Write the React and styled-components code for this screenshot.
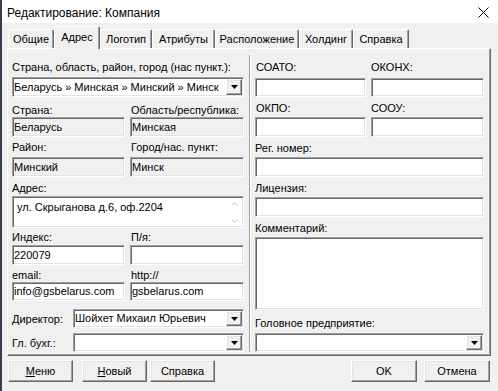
import React from 'react';
import styled, { createGlobalStyle } from 'styled-components';

const GlobalStyle = createGlobalStyle`
  html, body {
    margin: 0;
    padding: 0;
    background: #f0f0f0;
  }
  body {
    font-family: "Liberation Sans", Arial, sans-serif;
    font-size: 11px;
    color: #000;
  }
`;

const Window = styled.div`
  width: 498px;
  height: 391px;
  box-sizing: border-box;
  border-left: 2px solid #3a3b4c;
  background: #f0f0f0;
  overflow: hidden;
`;

const TitleBar = styled.div`
  height: 23px;
  background: #ffffff;
  display: flex;
  align-items: center;
  justify-content: space-between;
  padding: 2px 9px 0 5px;
  box-sizing: border-box;
`;

const Title = styled.div`
  font-size: 12px;
  color: #000;
`;

const TabStrip = styled.div`
  height: 25px;
  display: flex;
  align-items: flex-end;
  padding-left: 6px;
`;

const Tab = styled.div`
  position: relative;
  z-index: ${p => (p.$active ? 2 : 0)};
  width: ${p => p.$w}px;
  height: ${p => (p.$active ? 23 : 19)}px;
  margin-bottom: ${p => (p.$active ? -1 : 0)}px;
  box-sizing: border-box;
  border: 1px solid;
  border-bottom: none;
  border-color: #ffffff #696969 transparent #ffffff;
  box-shadow: inset -1px 0 0 #a0a0a0;
  border-radius: 2px 2px 0 0;
  background: #f0f0f0;
  font-size: 11px;
  line-height: ${p => (p.$active ? 20 : 18)}px;
  text-align: center;
  white-space: nowrap;
`;

const Panel = styled.div`
  position: relative;
  z-index: 1;
  margin-left: 5px;
  width: 484px;
  height: 308px;
  box-sizing: border-box;
  border-top: 1px solid #ffffff;
  border-left: 1px solid #ffffff;
  border-right: 1px solid #696969;
  border-bottom: 1px solid #696969;
  box-shadow: inset -1px -1px 0 #a0a0a0;
  display: flex;
  padding: 12px 6px 3px 4px;
`;

const Column = styled.div`
  width: ${p => p.$w}px;
  display: flex;
  flex-direction: column;
`;

const Divider = styled.div`
  width: 2px;
  margin: -6px 4px 0 5px;
  border-left: 1px solid #a0a0a0;
  border-right: 1px solid #ffffff;
  box-sizing: border-box;
`;

const Pair = styled.div`
  display: grid;
  grid-template-columns: ${p => p.$cols};
  column-gap: 5px;
  margin-top: ${p => p.$mt || 0}px;
`;

const Label = styled.div`
  height: 13px;
  line-height: 13px;
  font-size: 11px;
  white-space: nowrap;
  margin-top: ${p => p.$mt || 0}px;
  padding-left: ${p => p.$pl || 0}px;
`;

const Field = styled.div`
  height: ${p => p.$h || 20}px;
  margin-top: ${p => p.$mt || 0}px;
  box-sizing: border-box;
  border: 1px solid;
  border-color: #a0a0a0 #ffffff #ffffff #a0a0a0;
  box-shadow: inset 1px 1px 0 #696969, inset -1px -1px 0 #e3e3e3;
  background: ${p => (p.$readOnly ? '#f0f0f0' : '#ffffff')};
  padding-left: 1px;
  font-size: 11px;
  line-height: ${p => (p.$h || 20) - 2}px;
  white-space: nowrap;
  overflow: hidden;
`;

const Memo = styled(Field)`
  display: flex;
  line-height: 18px;
  padding: 1px 1px 1px 4px;
`;

const MemoText = styled.div`
  flex: 1;
`;

const ScrollCol = styled.div`
  width: 16px;
  display: flex;
  flex-direction: column;
  align-items: center;
  justify-content: space-between;
  padding: 4px 0 3px;
`;

const Combo = styled(Field)`
  display: flex;
  align-items: stretch;
  padding: 1px;
  flex: ${p => (p.$grow ? 1 : 'none')};
`;

const ComboText = styled.div`
  flex: 1;
  line-height: ${p => p.$lh}px;
  overflow: hidden;
`;

const DropBtn = styled.div`
  width: 16px;
  box-sizing: border-box;
  border: 1px solid;
  border-color: #ffffff #696969 #696969 #ffffff;
  box-shadow: inset -1px -1px 0 #a0a0a0, inset 1px 1px 0 #e3e3e3;
  background: #f0f0f0;
  display: flex;
  align-items: center;
  justify-content: center;
`;

const InlineRow = styled.div`
  display: flex;
  align-items: center;
  margin-top: ${p => p.$mt || 0}px;
`;

const InlineLabel = styled.div`
  width: 61px;
  font-size: 11px;
  white-space: nowrap;
`;

const ButtonRow = styled.div`
  display: flex;
  justify-content: space-between;
  margin-top: 4px;
  padding: 0 8px 0 6px;
`;

const ButtonGroup = styled.div`
  display: flex;
`;

const Button = styled.div`
  width: ${p => p.$w || 65}px;
  height: 22px;
  margin-left: ${p => p.$ml || 0}px;
  box-sizing: border-box;
  border: 1px solid;
  border-color: #ffffff #696969 #696969 #ffffff;
  box-shadow: inset -1px -1px 0 #a0a0a0, inset 1px 1px 0 #e3e3e3;
  background: #f0f0f0;
  font-size: 11px;
  line-height: 20px;
  text-align: center;
  & u {
    text-decoration: underline;
  }
`;

const Arrow = () => (
  <svg width="7" height="4" viewBox="0 0 7 4">
    <polygon points="0,0 7,0 3.5,4" fill="#000" />
  </svg>
);

const Chevron = ({ up }) => (
  <svg width="7" height="4" viewBox="0 0 7 4">
    <polyline
      points={up ? '0.5,3.5 3.5,0.5 6.5,3.5' : '0.5,0.5 3.5,3.5 6.5,0.5'}
      fill="none"
      stroke="#c4c4c4"
      strokeWidth="1"
    />
  </svg>
);

const CloseIcon = () => (
  <svg width="11" height="11" viewBox="0 0 11 11">
    <path d="M0.5 0.5 L10.5 10.5 M10.5 0.5 L0.5 10.5" stroke="#000" strokeWidth="1" />
  </svg>
);

const ComboBox = ({ h, mt, grow, children }) => (
  <Combo $h={h} $mt={mt} $grow={grow}>
    <ComboText $lh={h - 4}>{children}</ComboText>
    <DropBtn>
      <Arrow />
    </DropBtn>
  </Combo>
);

const tabs = [
  { name: 'Общие', w: 46 },
  { name: 'Адрес', w: 46, active: true },
  { name: 'Логотип', w: 52 },
  { name: 'Атрибуты', w: 63 },
  { name: 'Расположение', w: 84 },
  { name: 'Холдинг', w: 54 },
  { name: 'Справка', w: 56 },
];

const App = () => (
  <>
    <GlobalStyle />
    <Window>
      <TitleBar>
        <Title>Редактирование: Компания</Title>
        <CloseIcon />
      </TitleBar>
      <TabStrip>
        {tabs.map(t => (
          <Tab key={t.name} $w={t.w} $active={t.active}>{t.name}</Tab>
        ))}
      </TabStrip>
      <Panel>
        <Column $w={232}>
          <Label>Страна, область, район, город (нас пункт.):</Label>
          <ComboBox h={20} mt={3}>Беларусь » Минская » Минский » Минск</ComboBox>
          <Pair $cols="113px 114px" $mt={7}>
            <Label>Страна:</Label>
            <Label $pl={1}>Область/республика:</Label>
            <Field $readOnly>Беларусь</Field>
            <Field $readOnly>Минская</Field>
          </Pair>
          <Pair $cols="113px 114px" $mt={4}>
            <Label>Район:</Label>
            <Label $pl={1}>Город/нас. пункт:</Label>
            <Field $readOnly $mt={3}>Минский</Field>
            <Field $readOnly $mt={3}>Минск</Field>
          </Pair>
          <Label $mt={5}>Адрес:</Label>
          <Memo $h={32} $mt={1}>
            <MemoText>ул. Скрыганова д.6, оф.2204</MemoText>
            <ScrollCol>
              <Chevron up />
              <Chevron />
            </ScrollCol>
          </Memo>
          <Pair $cols="113px 114px" $mt={3}>
            <Label>Индекс:</Label>
            <Label $pl={1}>П/я:</Label>
            <Field $mt={1}>220079</Field>
            <Field $mt={1} />
          </Pair>
          <Pair $cols="113px 114px" $mt={4}>
            <Label>email:</Label>
            <Label $pl={1}>http://</Label>
            <Field $h={19}>info@gsbelarus.com</Field>
            <Field $h={19}>gsbelarus.com</Field>
          </Pair>
          <InlineRow $mt={8}>
            <InlineLabel>Директор:</InlineLabel>
            <ComboBox h={19} grow>Шойхет Михаил Юрьевич</ComboBox>
          </InlineRow>
          <InlineRow $mt={5}>
            <InlineLabel>Гл. бухг.:</InlineLabel>
            <ComboBox h={19} grow />
          </InlineRow>
        </Column>
        <Divider />
        <Column $w={229}>
          <Pair $cols="111px 113px">
            <Label $pl={1}>СОАТО:</Label>
            <Label>ОКОНХ:</Label>
            <Field $h={19} $mt={4} />
            <Field $h={19} $mt={4} />
          </Pair>
          <Pair $cols="111px 113px" $mt={5}>
            <Label $pl={1}>ОКПО:</Label>
            <Label>СООУ:</Label>
            <Field $mt={2} />
            <Field $mt={2} />
          </Pair>
          <Label $mt={5}>Рег. номер:</Label>
          <Field $mt={2} />
          <Label $mt={5}>Лицензия:</Label>
          <Field $mt={2} />
          <Label $mt={5}>Комментарий:</Label>
          <Field $h={73} $mt={2} />
          <Label $mt={7}>Головное предприятие:</Label>
          <ComboBox h={19} mt={3} />
        </Column>
      </Panel>
      <ButtonRow>
        <ButtonGroup>
          <Button><u>М</u>еню</Button>
          <Button $ml={9}><u>Н</u>овый</Button>
          <Button $ml={3}>Справка</Button>
        </ButtonGroup>
        <ButtonGroup>
          <Button $w={66}>OK</Button>
          <Button $w={66} $ml={7}>Отмена</Button>
        </ButtonGroup>
      </ButtonRow>
    </Window>
  </>
);

export default App;
